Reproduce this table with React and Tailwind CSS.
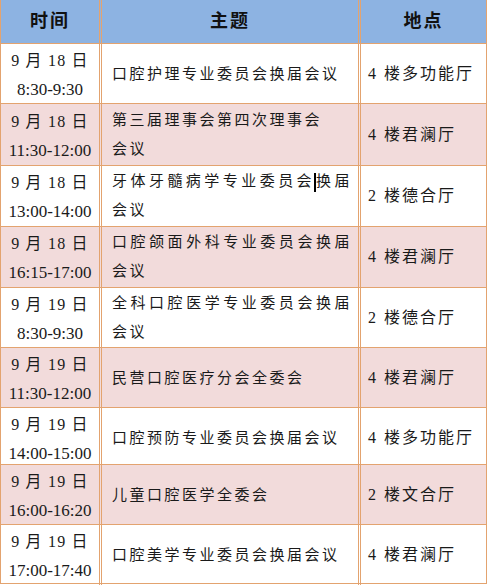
import React from 'react'

const rows = [
  { date: '9 月 18 日', time: '8:30-9:30', topic: ['口腔护理专业委员会换届会议'], place: '4 楼多功能厅', pink: false, h: 'h-[60px]' },
  { date: '9 月 18 日', time: '11:30-12:00', topic: ['第三届理事会第四次理事会', '会议'], place: '4 楼君澜厅', pink: true, h: 'h-[62px]' },
  { date: '9 月 18 日', time: '13:00-14:00', topic: ['牙体牙髓病学专业委员会', '换届', '会议'], cursor: true, place: '2 楼德合厅', pink: false, h: 'h-[61px]' },
  { date: '9 月 18 日', time: '16:15-17:00', topic: ['口腔颌面外科专业委员会换届', '会议'], just: true, place: '4 楼君澜厅', pink: true, h: 'h-[61px]' },
  { date: '9 月 19 日', time: '8:30-9:30', topic: ['全科口腔医学专业委员会换届', '会议'], just: true, place: '2 楼德合厅', pink: false, h: 'h-[60px]' },
  { date: '9 月 19 日', time: '11:30-12:00', topic: ['民营口腔医疗分会全委会'], place: '4 楼君澜厅', pink: true, h: 'h-[60px]' },
  { date: '9 月 19 日', time: '14:00-15:00', topic: ['口腔预防专业委员会换届会议'], place: '4 楼多功能厅', pink: false, h: 'h-[57px]' },
  { date: '9 月 19 日', time: '16:00-16:20', topic: ['儿童口腔医学全委会'], place: '2 楼文合厅', pink: true, h: 'h-[60px]' },
  { date: '9 月 19 日', time: '17:00-17:40', topic: ['口腔美学专业委员会换届会议'], place: '4 楼君澜厅', pink: false, h: 'h-[58px]' },
]

function Topic({ row }) {
  if (row.cursor) {
    return (
      <div className="leading-[29px]">
        <div className="w-[240px] text-justify [text-align-last:justify]">
          {row.topic[0]}
          <span className="inline-block w-[2px] h-[19px] bg-black align-middle -mx-[1px]"></span>
          {row.topic[1]}
        </div>
        <div>{row.topic[2]}</div>
      </div>
    )
  }
  if (row.topic.length === 1) {
    return <div className="leading-[29px]">{row.topic[0]}</div>
  }
  return (
    <div className="leading-[29px]">
      <div className={row.just ? 'w-[240px] text-justify [text-align-last:justify]' : ''}>{row.topic[0]}</div>
      <div>{row.topic[1]}</div>
    </div>
  )
}

export default function App() {
  return (
    <div className="w-[488px] h-[585px] bg-white text-[#1a1a1a]" style={{ fontFamily: '"Liberation Serif", "Noto Sans CJK SC", serif' }}>
      <div className="w-[487px] border-l border-r border-b border-[#e3a36f]">
        <div className="grid grid-cols-[101px_259px_1fr] h-[44px] bg-[#8db3e2] border-b border-[#e3a36f] text-[18px] font-bold tracking-[2px] text-[#111]">
          <div className="flex items-center justify-center border-r-[3px] border-double border-[#e3a36f]">时间</div>
          <div className="flex items-center justify-center border-r-[3px] border-double border-[#e3a36f]">主题</div>
          <div className="flex items-center justify-center">地点</div>
        </div>
        {rows.map((row, i) => (
          <div
            key={i}
            className={`grid grid-cols-[101px_259px_1fr] ${row.h} ${row.pink ? 'bg-[#f2dbdb]' : 'bg-white'} ${i < rows.length - 1 ? 'border-b border-[#e3a36f]' : ''}`}
          >
            <div className="flex flex-col items-center justify-center pt-[2px] border-r-[3px] border-double border-[#e3a36f] leading-[29px]">
              <div className="text-[16px] tracking-[1.2px]">{row.date}</div>
              <div className="text-[17px]">{row.time}</div>
            </div>
            <div className="flex items-center pl-[10px] border-r-[3px] border-double border-[#e3a36f] text-[15px] tracking-[2.5px]">
              <Topic row={row} />
            </div>
            <div className="flex items-center pl-[7px] text-[16px] tracking-[2px]">{row.place}</div>
          </div>
        ))}
      </div>
    </div>
  )
}
